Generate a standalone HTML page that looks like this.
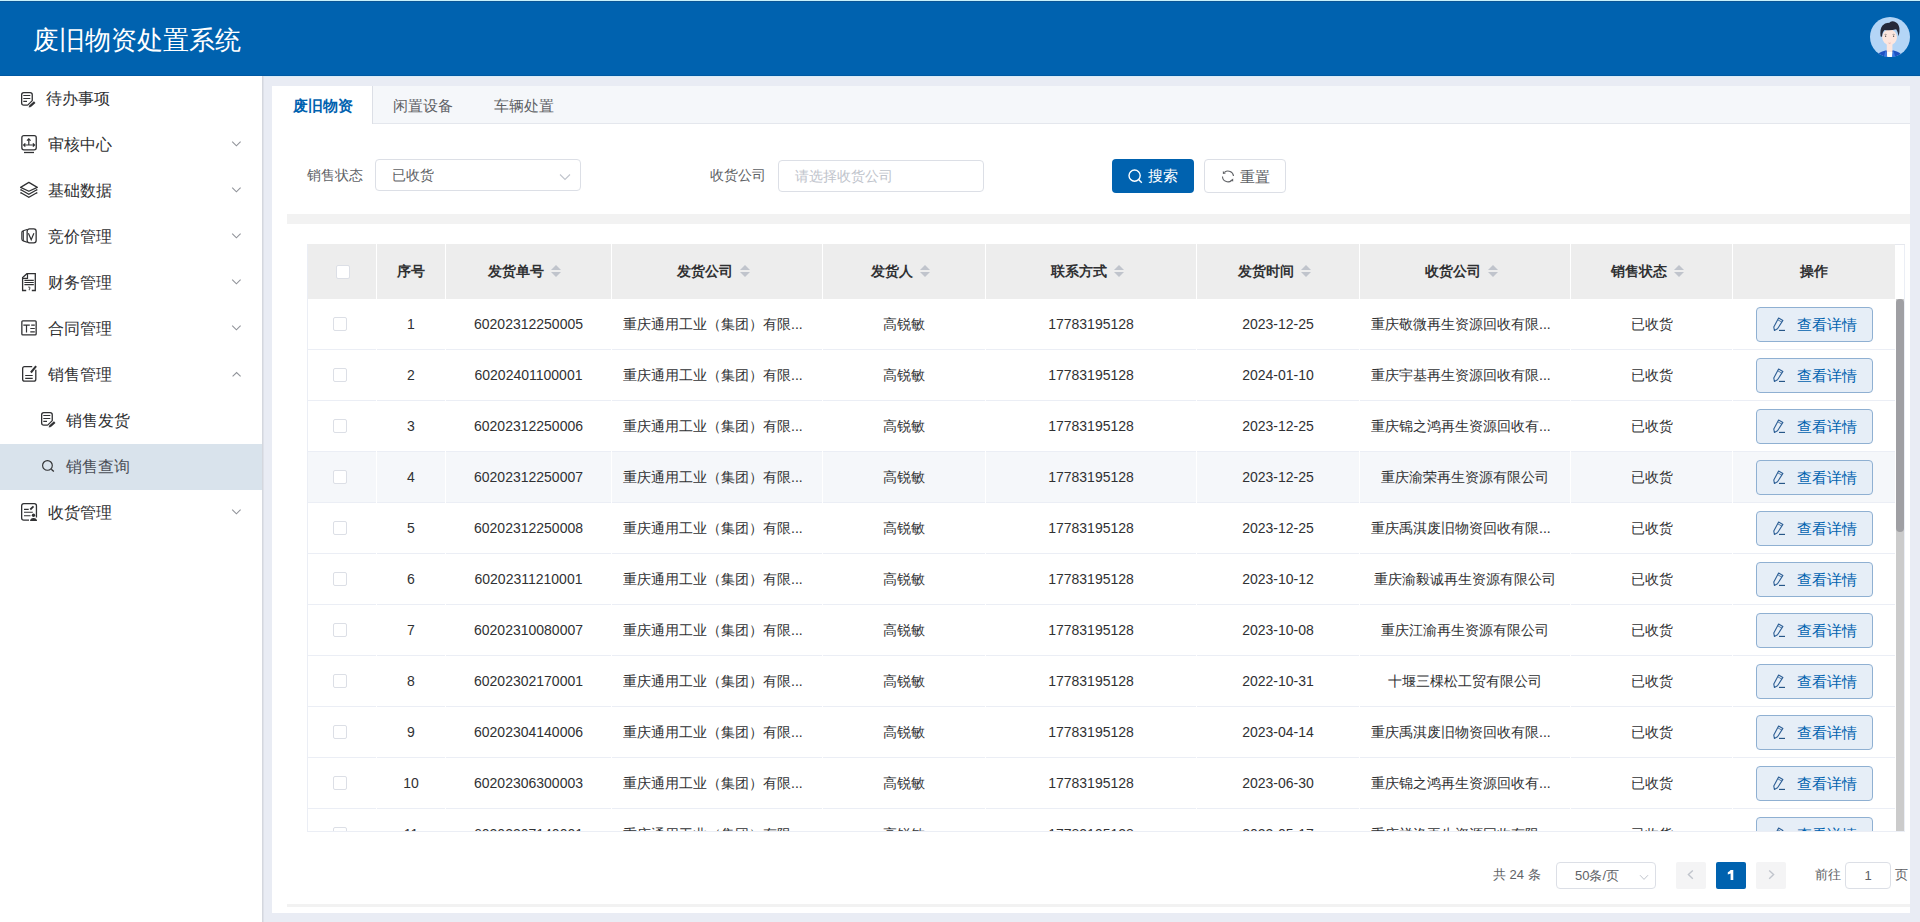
<!DOCTYPE html><html><head><meta charset="utf-8"><title>废旧物资处置系统</title><style>
*{box-sizing:border-box;margin:0;padding:0}
html,body{width:1920px;height:922px;overflow:hidden;background:#e9ecf4;font-family:"Liberation Sans",sans-serif;color:#303133}
.abs{position:absolute}
#hdr{left:0;top:0;width:1920px;height:76px;background:#0062af}
#hdr .l0{position:absolute;left:0;top:0;width:1920px;height:1px;background:#c6f1fc}
#hdr .l1{position:absolute;left:0;top:1px;width:1920px;height:1px;background:#0c5594}
#hdr .l2{position:absolute;left:0;top:75px;width:1920px;height:1px;background:#0059a3}
#hdr .l3{position:absolute;left:0;top:76px;width:1920px;height:1px;background:#d8ecf8}
#title{left:33px;top:22px;font-size:26px;line-height:36px;color:#fff;white-space:nowrap;letter-spacing:0}
#avatar{left:1870px;top:17px;width:40px;height:40px}
#side{left:0;top:76px;width:262px;height:846px;background:#fff}
#sideb{left:262px;top:76px;width:2px;height:846px;background:linear-gradient(90deg,#cfd2d9,#e3e6ee)}
.mi{position:absolute;left:0;width:262px;height:46px}
.mi .t{position:absolute;left:48px;top:13px;font-size:16px;line-height:20px;color:#303133;white-space:nowrap}
.mi svg.ic{position:absolute;left:17px;top:11px;width:24px;height:24px;overflow:visible}
.mi svg.ar{position:absolute;left:230px;top:18px;width:12px;height:10px}
.mi.sub .t{left:66px;color:#303133}
.mi.first .t{left:46px}
.mi.sub svg.ic{left:37px;top:9px}
.mi.sel{background:#d9e3ec}
.mi.sel .t{color:#4a4e56}
#card{left:272px;top:86px;width:1638px;height:827px;background:#fff}
#tabs{left:272px;top:86px;width:1638px;height:38px;background:#f5f7fa;border-bottom:1px solid #e4e7ed}
#tab1{left:272px;top:86px;width:101px;height:38px;background:#fff;border-right:1px solid #dcdfe6}
.tab{position:absolute;top:96px;font-size:15px;line-height:20px;white-space:nowrap;color:#606266}
.lbl{position:absolute;font-size:14px;line-height:20px;color:#606266;white-space:nowrap}
.inp{position:absolute;border:1px solid #dcdfe6;border-radius:4px;background:#fff}
.inp .v{position:absolute;left:16px;top:5px;font-size:14px;line-height:20px;color:#606266;white-space:nowrap}
.inp .ph{color:#c0c4cc}
.btn{position:absolute;border-radius:4px;font-size:15px;line-height:20px;white-space:nowrap}
#sep{left:287px;top:214px;width:1623px;height:10px;background:#f2f2f2}
#tbl{left:307px;top:244px;width:1598px;height:588px;border:1px solid #ebeef5;border-top:none;border-right:1px solid #ebeef5;overflow:hidden;background:#fff}
#thead{position:absolute;left:0;top:0;width:1588px;height:55px;background:#ededed}
.th{position:absolute;top:0;height:55px;border-right:1px solid #fff}
.th span{position:absolute;left:0;right:1px;top:17px;text-align:center;font-size:14px;line-height:20px;font-weight:bold;color:#303133;white-space:nowrap}
.sort{display:inline-block;position:relative;width:24px;height:14px;vertical-align:-3px;margin-left:0}
.sort b{position:absolute;left:7px;width:0;height:0;border-left:5px solid transparent;border-right:5px solid transparent}
.sort .up{top:0;border-bottom:5px solid #c0c4cc}
.sort .dn{top:7px;border-top:5px solid #c0c4cc}
.tr{position:absolute;left:0;width:1588px;height:51px;background:#fff}
.tr .c{position:absolute;top:0;height:51px;border-bottom:1px solid #ebeef5}
.tr.hov .c{background:#f5f7fa}
.td{position:absolute;top:15px;text-align:center;font-size:14px;line-height:20px;color:#303133;white-space:nowrap}
.cb{position:absolute;width:14px;height:14px;border:1px solid #dcdfe6;border-radius:2px;background:#fff}
.vbtn{position:absolute;left:1448px;top:8px;width:117px;height:35px;border:1px solid #8fb0d2;border-radius:4px;background:#e6eef7}
.vbtn span{position:absolute;left:40px;top:7px;font-size:15px;line-height:20px;color:#0062af;white-space:nowrap}
.vbtn svg{position:absolute;left:14px;top:8px;width:14px;height:15px;overflow:visible}
#sbtrack{left:1896px;top:299px;width:8px;height:532px;background:#cbcbcb}
#sbthumb{left:1896px;top:299px;width:8px;height:233px;background:#9f9fa3;border-radius:4px}
.pg{position:absolute;font-size:13px;line-height:20px;color:#606266;white-space:nowrap}
#bline{left:287px;top:904px;width:1623px;height:3px;background:#f2f2f2}
</style></head><body>
<div id="hdr" class="abs"><div class="l0"></div><div class="l1"></div><div class="l2"></div><div class="l3"></div></div>
<div id="title" class="abs">废旧物资处置系统</div>
<svg id="avatar" class="abs" viewBox="0 0 40 40">
<defs><clipPath id="avc"><circle cx="20" cy="20" r="20"/></clipPath></defs>
<circle cx="20" cy="20" r="20" fill="#b4d5f6"/>
<g clip-path="url(#avc)">
<path d="M6 41 Q7.5 35.2 15.5 33.6 L23.5 33.6 Q31.5 35.2 33 41 Z" fill="#1f52c2"/>
<path d="M16.8 27 H22.4 V41 H16.8 Z" fill="#fde6de"/>
<path d="M17.2 35 H22.2 V41 H17.2 Z" fill="#ffffff"/>
<path d="M15.6 33.6 L17.6 41 L13.5 41 Z M23.4 33.6 L21.6 41 L25.6 41 Z" fill="#3a7be6"/>
</g>
<ellipse cx="19.6" cy="20.2" rx="7.4" ry="7.8" fill="#fde6de"/>
<path d="M10.6 19.5 Q9.6 12 12.5 8.6 Q15 5.6 19 5.9 Q21.2 3.4 24.2 4.6 Q28.6 6 29.4 11 Q29.9 15 28.6 19.2 Q27.9 14.5 26.2 12.2 Q21 13.6 14.6 12.9 Q12.2 15 12 19.8 Z" fill="#262939"/>
<path d="M14.6 17.6 Q15.6 17.1 16.6 17.5 M22.6 17.5 Q23.6 17.1 24.6 17.6" fill="none" stroke="#444" stroke-width="0.5"/>
<circle cx="15.6" cy="19.2" r="0.65" fill="#333"/><circle cx="23.6" cy="19.2" r="0.65" fill="#333"/>
<path d="M18.6 26 Q19.6 26.7 20.6 26" fill="none" stroke="#e39a90" stroke-width="0.7"/>
</svg>
<div id="side" class="abs"></div><div id="sideb" class="abs"></div>
<div class="mi first" style="top:76px"><svg class="ic" viewBox="0 0 24 24"><path d="M10.7 18.15 H6.8 Q4.65 18.15 4.65 16 V7.8 Q4.65 5.65 6.8 5.65 H13.1 Q15.25 5.65 15.25 7.8 V13.6 L10.7 18.15" fill="none" stroke="#303133" stroke-width="1.3" stroke-linejoin="round"/><path d="M6.3 8.5 H13.3 M6.3 11.5 H13.3 M6.3 14.4 H10" fill="none" stroke="#303133" stroke-width="1.2"/><path d="M12.9 19.4 L17.7 15.1" stroke="#303133" stroke-width="2.2"/><path d="M11.7 20.6 L12.1 18.5 L13.7 20.1 Z" fill="#303133"/></svg><span class="t">待办事项</span></div>
<div class="mi " style="top:122px"><svg class="ic" viewBox="0 0 24 24"><rect x="4.85" y="2.65" width="14.4" height="14.2" rx="2" fill="none" stroke="#303133" stroke-width="1.3"/><path d="M7 19.5 H17" stroke="#303133" stroke-width="1.3"/><path d="M11.8 5.8 V12 M6.6 12 H17.6 M10 7.6 L11.8 5.8 L13.6 7.6 M8.3 10.3 L6.6 12 L8.3 13.7 M15.9 10.3 L17.6 12 L15.9 13.7" fill="none" stroke="#303133" stroke-width="1.2"/></svg><span class="t">审核中心</span><svg class="ar" viewBox="0 0 12 10"><path d="M2.2 1.6 L6.4 5.8 L10.6 1.6" fill="none" stroke="#909399" stroke-width="1.1"/></svg></div>
<div class="mi " style="top:168px"><svg class="ic" viewBox="0 0 24 24"><path d="M11.85 3.4 L20.3 8.4 L11.85 12.3 L3.6 8.4 Z" fill="none" stroke="#303133" stroke-width="1.25" stroke-linejoin="round"/><path d="M3.9 10.8 L11.85 15.3 L19.8 10.8 M3.9 13.8 L11.85 18.4 L19.8 13.8" fill="none" stroke="#303133" stroke-width="1.25"/><path d="M3.9 10.2 V11.4 M19.8 10.2 V11.4 M3.9 13.2 V14.4 M19.8 13.2 V14.4" stroke="#303133" stroke-width="1.2"/></svg><span class="t">基础数据</span><svg class="ar" viewBox="0 0 12 10"><path d="M2.2 1.6 L6.4 5.8 L10.6 1.6" fill="none" stroke="#909399" stroke-width="1.1"/></svg></div>
<div class="mi " style="top:214px"><svg class="ic" viewBox="0 0 24 24"><rect x="10.15" y="3.85" width="9" height="14" rx="2.4" fill="none" stroke="#303133" stroke-width="1.3"/><path d="M10.1 4.5 L6.2 5.8 Q4.85 6.2 4.85 7.6 V14.1 Q4.85 15.5 6.2 15.9 L10.1 17.2" fill="none" stroke="#303133" stroke-width="1.2"/><path d="M6.3 6 V15.7" stroke="#303133" stroke-width="1.1"/><path d="M11.4 8.2 L14.2 14.7 L16.9 8.2" fill="none" stroke="#303133" stroke-width="1.2"/></svg><span class="t">竞价管理</span><svg class="ar" viewBox="0 0 12 10"><path d="M2.2 1.6 L6.4 5.8 L10.6 1.6" fill="none" stroke="#909399" stroke-width="1.1"/></svg></div>
<div class="mi " style="top:260px"><svg class="ic" viewBox="0 0 24 24"><path d="M9.2 19.5 H5.6 V6.6 L9.9 2.7 H18.3 V19.5 H14.8" fill="none" stroke="#303133" stroke-width="1.3"/><path d="M5.6 7.4 H10.5 V2.7" fill="none" stroke="#303133" stroke-width="1.2"/><path d="M7.4 9.4 H16.8 M7.4 11.5 H16.8 M7.4 13.6 H16.8" stroke="#303133" stroke-width="1.1"/><path d="M11.2 16.3 Q12.2 15.6 12.8 16.4 Q13.1 17.6 12 19.2" fill="none" stroke="#555" stroke-width="1.1"/></svg><span class="t">财务管理</span><svg class="ar" viewBox="0 0 12 10"><path d="M2.2 1.6 L6.4 5.8 L10.6 1.6" fill="none" stroke="#909399" stroke-width="1.1"/></svg></div>
<div class="mi " style="top:306px"><svg class="ic" viewBox="0 0 24 24"><rect x="4.85" y="3.85" width="14.3" height="14.1" rx="1" fill="none" stroke="#303133" stroke-width="1.3"/><path d="M6.3 8.2 H12.8 M9.5 8.2 V15.5 M14.2 8.2 H17.8 M13.3 11.5 H17.8 M13.3 14.9 H17.8" fill="none" stroke="#303133" stroke-width="1.2"/></svg><span class="t">合同管理</span><svg class="ar" viewBox="0 0 12 10"><path d="M2.2 1.6 L6.4 5.8 L10.6 1.6" fill="none" stroke="#909399" stroke-width="1.1"/></svg></div>
<div class="mi " style="top:352px"><svg class="ic" viewBox="0 0 24 24"><path d="M15.2 3.55 H7.6 Q5.65 3.55 5.65 5.5 V16.2 Q5.65 18.15 7.6 18.15 H16.85 Q18.8 18.15 18.8 16.2 V6.8" fill="none" stroke="#303133" stroke-width="1.3"/><path d="M13.9 9.5 L19.1 3.2" stroke="#303133" stroke-width="2"/><path d="M8.2 12.5 H15.7 M8.2 15.4 H15.7" stroke="#303133" stroke-width="1.2"/></svg><span class="t">销售管理</span><svg class="ar" viewBox="0 0 12 10"><path d="M2.6 6.4 L6.6 2.6 L10.6 6.4" fill="none" stroke="#909399" stroke-width="1.1"/></svg></div>
<div class="mi sub" style="top:398px"><svg class="ic" viewBox="0 0 24 24"><path d="M10.7 18.15 H6.8 Q4.65 18.15 4.65 16 V7.8 Q4.65 5.65 6.8 5.65 H13.1 Q15.25 5.65 15.25 7.8 V13.6 L10.7 18.15" fill="none" stroke="#303133" stroke-width="1.3" stroke-linejoin="round"/><path d="M6.3 8.5 H13.3 M6.3 11.5 H13.3 M6.3 14.4 H10" fill="none" stroke="#303133" stroke-width="1.2"/><path d="M12.9 19.4 L17.7 15.1" stroke="#303133" stroke-width="2.2"/><path d="M11.7 20.6 L12.1 18.5 L13.7 20.1 Z" fill="#303133"/></svg><span class="t">销售发货</span></div>
<div class="mi sub sel" style="top:444px"><svg class="ic" viewBox="0 0 24 24"><circle cx="10.45" cy="12.4" r="4.85" fill="none" stroke="#303133" stroke-width="1.15"/><path d="M14.3 16.3 L16.8 18.6" stroke="#303133" stroke-width="1.3"/></svg><span class="t">销售查询</span></div>
<div class="mi " style="top:490px"><svg class="ic" viewBox="0 0 24 24"><path d="M12 19.15 H6.8 Q4.65 19.15 4.65 17 V4.8 Q4.65 2.65 6.8 2.65 H17.3 Q19.45 2.65 19.45 4.8 V16.5" fill="none" stroke="#303133" stroke-width="1.3"/><path d="M7 8.4 H11.7 M7 11.3 H15.8 M7 14.7 H13.5" stroke="#303133" stroke-width="1.1"/><path d="M13.3 8.5 L16.5 5.3" stroke="#303133" stroke-width="1.8"/><circle cx="16.5" cy="14.3" r="1.7" fill="#303133"/><path d="M13 19.9 Q13.3 16.9 16.5 16.9 Q19.7 16.9 20.1 19.9 Z" fill="#303133"/></svg><span class="t">收货管理</span><svg class="ar" viewBox="0 0 12 10"><path d="M2.2 1.6 L6.4 5.8 L10.6 1.6" fill="none" stroke="#909399" stroke-width="1.1"/></svg></div>
<div id="card" class="abs"></div>
<div id="tabs" class="abs"></div><div id="tab1" class="abs"></div>
<span class="tab" style="left:293px;color:#0062af;font-weight:bold">废旧物资</span>
<span class="tab" style="left:393px">闲置设备</span>
<span class="tab" style="left:494px">车辆处置</span>
<span class="lbl" style="left:307px;top:165px">销售状态</span>
<div class="inp" style="left:375px;top:159px;width:206px;height:32px"><span class="v">已收货</span><svg style="position:absolute;left:183px;top:13px;width:12px;height:8px" viewBox="0 0 12 8"><path d="M1 1.5 L6 6.5 L11 1.5" fill="none" stroke="#c0c4cc" stroke-width="1.1"/></svg></div>
<span class="lbl" style="left:710px;top:165px">收货公司</span>
<div class="inp" style="left:778px;top:160px;width:206px;height:32px"><span class="v ph">请选择收货公司</span></div>
<div class="btn" style="left:1112px;top:159px;width:82px;height:34px;background:#0062af"><svg style="position:absolute;left:16px;top:10px;width:15px;height:15px" viewBox="0 0 15 15"><circle cx="6.6" cy="6.6" r="5.6" fill="none" stroke="#fff" stroke-width="1.4"/><path d="M10.6 10.6 L13.8 13.8" stroke="#fff" stroke-width="1.4"/></svg><span style="position:absolute;left:36px;top:7px;color:#fff">搜索</span></div>
<div class="btn" style="left:1204px;top:159px;width:82px;height:34px;background:#fff;border:1px solid #dcdfe6"><svg style="position:absolute;left:15px;top:8px;width:16px;height:16px" viewBox="0 0 16 16"><path d="M4.6 4.3 A5.5 5.5 0 0 1 13.49 8.02" fill="none" stroke="#606266" stroke-width="1.1"/><path d="M2.5 8.4 A5.5 5.5 0 0 0 11.6 12.5" fill="none" stroke="#606266" stroke-width="1.1"/><path d="M2.9 3.1 L2.9 6 L5.8 5.6 Z" fill="#606266"/><path d="M13.2 10.6 L13.2 13.5 L10.2 12.6 Z" fill="#606266"/></svg><span style="position:absolute;left:35px;top:7px;color:#606266">重置</span></div>
<div id="sep" class="abs"></div>
<div id="tbl" class="abs">
<div id="thead">
<div class="th" style="left:0px;width:69px"><div class="cb" style="left:28px;top:21px"></div></div>
<div class="th" style="left:69px;width:69px"><span>序号</span></div>
<div class="th" style="left:138px;width:166px"><span>发货单号<i class="sort"><b class="up"></b><b class="dn"></b></i></span></div>
<div class="th" style="left:304px;width:211px"><span>发货公司<i class="sort"><b class="up"></b><b class="dn"></b></i></span></div>
<div class="th" style="left:515px;width:163px"><span>发货人<i class="sort"><b class="up"></b><b class="dn"></b></i></span></div>
<div class="th" style="left:678px;width:211px"><span>联系方式<i class="sort"><b class="up"></b><b class="dn"></b></i></span></div>
<div class="th" style="left:889px;width:163px"><span>发货时间<i class="sort"><b class="up"></b><b class="dn"></b></i></span></div>
<div class="th" style="left:1052px;width:211px"><span>收货公司<i class="sort"><b class="up"></b><b class="dn"></b></i></span></div>
<div class="th" style="left:1263px;width:162px"><span>销售状态<i class="sort"><b class="up"></b><b class="dn"></b></i></span></div>
<div class="th" style="left:1425px;width:163px"><span>操作</span></div>
</div>
<div class="tr" style="top:55px"><div class="c" style="left:0px;width:68px"></div><div class="c" style="left:69px;width:68px"></div><div class="c" style="left:138px;width:165px"></div><div class="c" style="left:304px;width:210px"></div><div class="c" style="left:515px;width:162px"></div><div class="c" style="left:678px;width:210px"></div><div class="c" style="left:889px;width:162px"></div><div class="c" style="left:1052px;width:210px"></div><div class="c" style="left:1263px;width:161px"></div><div class="c" style="left:1425px;width:162px"></div><div class="cb" style="left:25px;top:18px"></div><span class="td" style="left:69px;width:68px">1</span><span class="td" style="left:138px;width:165px">60202312250005</span><span class="td" style="left:315px;text-align:left">重庆通用工业（集团）有限...</span><span class="td" style="left:515px;width:162px">高锐敏</span><span class="td" style="left:678px;width:210px">17783195128</span><span class="td" style="left:889px;width:162px">2023-12-25</span><span class="td" style="left:1063px;text-align:left">重庆敬微再生资源回收有限...</span><span class="td" style="left:1263px;width:161px">已收货</span><div class="vbtn"><svg viewBox="0 0 14 15"><path d="M7.6 2.1 L11.9 4.4 L6.5 12.8 L3.4 14.4 L2.8 11.1 Z" fill="none" stroke="#2d5f96" stroke-width="1.1" stroke-linejoin="round"/><path d="M6.9 3.9 L10.9 6.1" stroke="#2d5f96" stroke-width="0.8"/><path d="M8 14.4 H14" stroke="#1d4e82" stroke-width="1.1"/></svg><span>查看详情</span></div></div>
<div class="tr" style="top:106px"><div class="c" style="left:0px;width:68px"></div><div class="c" style="left:69px;width:68px"></div><div class="c" style="left:138px;width:165px"></div><div class="c" style="left:304px;width:210px"></div><div class="c" style="left:515px;width:162px"></div><div class="c" style="left:678px;width:210px"></div><div class="c" style="left:889px;width:162px"></div><div class="c" style="left:1052px;width:210px"></div><div class="c" style="left:1263px;width:161px"></div><div class="c" style="left:1425px;width:162px"></div><div class="cb" style="left:25px;top:18px"></div><span class="td" style="left:69px;width:68px">2</span><span class="td" style="left:138px;width:165px">60202401100001</span><span class="td" style="left:315px;text-align:left">重庆通用工业（集团）有限...</span><span class="td" style="left:515px;width:162px">高锐敏</span><span class="td" style="left:678px;width:210px">17783195128</span><span class="td" style="left:889px;width:162px">2024-01-10</span><span class="td" style="left:1063px;text-align:left">重庆宇基再生资源回收有限...</span><span class="td" style="left:1263px;width:161px">已收货</span><div class="vbtn"><svg viewBox="0 0 14 15"><path d="M7.6 2.1 L11.9 4.4 L6.5 12.8 L3.4 14.4 L2.8 11.1 Z" fill="none" stroke="#2d5f96" stroke-width="1.1" stroke-linejoin="round"/><path d="M6.9 3.9 L10.9 6.1" stroke="#2d5f96" stroke-width="0.8"/><path d="M8 14.4 H14" stroke="#1d4e82" stroke-width="1.1"/></svg><span>查看详情</span></div></div>
<div class="tr" style="top:157px"><div class="c" style="left:0px;width:68px"></div><div class="c" style="left:69px;width:68px"></div><div class="c" style="left:138px;width:165px"></div><div class="c" style="left:304px;width:210px"></div><div class="c" style="left:515px;width:162px"></div><div class="c" style="left:678px;width:210px"></div><div class="c" style="left:889px;width:162px"></div><div class="c" style="left:1052px;width:210px"></div><div class="c" style="left:1263px;width:161px"></div><div class="c" style="left:1425px;width:162px"></div><div class="cb" style="left:25px;top:18px"></div><span class="td" style="left:69px;width:68px">3</span><span class="td" style="left:138px;width:165px">60202312250006</span><span class="td" style="left:315px;text-align:left">重庆通用工业（集团）有限...</span><span class="td" style="left:515px;width:162px">高锐敏</span><span class="td" style="left:678px;width:210px">17783195128</span><span class="td" style="left:889px;width:162px">2023-12-25</span><span class="td" style="left:1063px;text-align:left">重庆锦之鸿再生资源回收有...</span><span class="td" style="left:1263px;width:161px">已收货</span><div class="vbtn"><svg viewBox="0 0 14 15"><path d="M7.6 2.1 L11.9 4.4 L6.5 12.8 L3.4 14.4 L2.8 11.1 Z" fill="none" stroke="#2d5f96" stroke-width="1.1" stroke-linejoin="round"/><path d="M6.9 3.9 L10.9 6.1" stroke="#2d5f96" stroke-width="0.8"/><path d="M8 14.4 H14" stroke="#1d4e82" stroke-width="1.1"/></svg><span>查看详情</span></div></div>
<div class="tr hov" style="top:208px"><div class="c" style="left:0px;width:68px"></div><div class="c" style="left:69px;width:68px"></div><div class="c" style="left:138px;width:165px"></div><div class="c" style="left:304px;width:210px"></div><div class="c" style="left:515px;width:162px"></div><div class="c" style="left:678px;width:210px"></div><div class="c" style="left:889px;width:162px"></div><div class="c" style="left:1052px;width:210px"></div><div class="c" style="left:1263px;width:161px"></div><div class="c" style="left:1425px;width:162px"></div><div class="cb" style="left:25px;top:18px"></div><span class="td" style="left:69px;width:68px">4</span><span class="td" style="left:138px;width:165px">60202312250007</span><span class="td" style="left:315px;text-align:left">重庆通用工业（集团）有限...</span><span class="td" style="left:515px;width:162px">高锐敏</span><span class="td" style="left:678px;width:210px">17783195128</span><span class="td" style="left:889px;width:162px">2023-12-25</span><span class="td" style="left:1052px;width:210px">重庆渝荣再生资源有限公司</span><span class="td" style="left:1263px;width:161px">已收货</span><div class="vbtn"><svg viewBox="0 0 14 15"><path d="M7.6 2.1 L11.9 4.4 L6.5 12.8 L3.4 14.4 L2.8 11.1 Z" fill="none" stroke="#2d5f96" stroke-width="1.1" stroke-linejoin="round"/><path d="M6.9 3.9 L10.9 6.1" stroke="#2d5f96" stroke-width="0.8"/><path d="M8 14.4 H14" stroke="#1d4e82" stroke-width="1.1"/></svg><span>查看详情</span></div></div>
<div class="tr" style="top:259px"><div class="c" style="left:0px;width:68px"></div><div class="c" style="left:69px;width:68px"></div><div class="c" style="left:138px;width:165px"></div><div class="c" style="left:304px;width:210px"></div><div class="c" style="left:515px;width:162px"></div><div class="c" style="left:678px;width:210px"></div><div class="c" style="left:889px;width:162px"></div><div class="c" style="left:1052px;width:210px"></div><div class="c" style="left:1263px;width:161px"></div><div class="c" style="left:1425px;width:162px"></div><div class="cb" style="left:25px;top:18px"></div><span class="td" style="left:69px;width:68px">5</span><span class="td" style="left:138px;width:165px">60202312250008</span><span class="td" style="left:315px;text-align:left">重庆通用工业（集团）有限...</span><span class="td" style="left:515px;width:162px">高锐敏</span><span class="td" style="left:678px;width:210px">17783195128</span><span class="td" style="left:889px;width:162px">2023-12-25</span><span class="td" style="left:1063px;text-align:left">重庆禹淇废旧物资回收有限...</span><span class="td" style="left:1263px;width:161px">已收货</span><div class="vbtn"><svg viewBox="0 0 14 15"><path d="M7.6 2.1 L11.9 4.4 L6.5 12.8 L3.4 14.4 L2.8 11.1 Z" fill="none" stroke="#2d5f96" stroke-width="1.1" stroke-linejoin="round"/><path d="M6.9 3.9 L10.9 6.1" stroke="#2d5f96" stroke-width="0.8"/><path d="M8 14.4 H14" stroke="#1d4e82" stroke-width="1.1"/></svg><span>查看详情</span></div></div>
<div class="tr" style="top:310px"><div class="c" style="left:0px;width:68px"></div><div class="c" style="left:69px;width:68px"></div><div class="c" style="left:138px;width:165px"></div><div class="c" style="left:304px;width:210px"></div><div class="c" style="left:515px;width:162px"></div><div class="c" style="left:678px;width:210px"></div><div class="c" style="left:889px;width:162px"></div><div class="c" style="left:1052px;width:210px"></div><div class="c" style="left:1263px;width:161px"></div><div class="c" style="left:1425px;width:162px"></div><div class="cb" style="left:25px;top:18px"></div><span class="td" style="left:69px;width:68px">6</span><span class="td" style="left:138px;width:165px">60202311210001</span><span class="td" style="left:315px;text-align:left">重庆通用工业（集团）有限...</span><span class="td" style="left:515px;width:162px">高锐敏</span><span class="td" style="left:678px;width:210px">17783195128</span><span class="td" style="left:889px;width:162px">2023-10-12</span><span class="td" style="left:1052px;width:210px">重庆渝毅诚再生资源有限公司</span><span class="td" style="left:1263px;width:161px">已收货</span><div class="vbtn"><svg viewBox="0 0 14 15"><path d="M7.6 2.1 L11.9 4.4 L6.5 12.8 L3.4 14.4 L2.8 11.1 Z" fill="none" stroke="#2d5f96" stroke-width="1.1" stroke-linejoin="round"/><path d="M6.9 3.9 L10.9 6.1" stroke="#2d5f96" stroke-width="0.8"/><path d="M8 14.4 H14" stroke="#1d4e82" stroke-width="1.1"/></svg><span>查看详情</span></div></div>
<div class="tr" style="top:361px"><div class="c" style="left:0px;width:68px"></div><div class="c" style="left:69px;width:68px"></div><div class="c" style="left:138px;width:165px"></div><div class="c" style="left:304px;width:210px"></div><div class="c" style="left:515px;width:162px"></div><div class="c" style="left:678px;width:210px"></div><div class="c" style="left:889px;width:162px"></div><div class="c" style="left:1052px;width:210px"></div><div class="c" style="left:1263px;width:161px"></div><div class="c" style="left:1425px;width:162px"></div><div class="cb" style="left:25px;top:18px"></div><span class="td" style="left:69px;width:68px">7</span><span class="td" style="left:138px;width:165px">60202310080007</span><span class="td" style="left:315px;text-align:left">重庆通用工业（集团）有限...</span><span class="td" style="left:515px;width:162px">高锐敏</span><span class="td" style="left:678px;width:210px">17783195128</span><span class="td" style="left:889px;width:162px">2023-10-08</span><span class="td" style="left:1052px;width:210px">重庆江渝再生资源有限公司</span><span class="td" style="left:1263px;width:161px">已收货</span><div class="vbtn"><svg viewBox="0 0 14 15"><path d="M7.6 2.1 L11.9 4.4 L6.5 12.8 L3.4 14.4 L2.8 11.1 Z" fill="none" stroke="#2d5f96" stroke-width="1.1" stroke-linejoin="round"/><path d="M6.9 3.9 L10.9 6.1" stroke="#2d5f96" stroke-width="0.8"/><path d="M8 14.4 H14" stroke="#1d4e82" stroke-width="1.1"/></svg><span>查看详情</span></div></div>
<div class="tr" style="top:412px"><div class="c" style="left:0px;width:68px"></div><div class="c" style="left:69px;width:68px"></div><div class="c" style="left:138px;width:165px"></div><div class="c" style="left:304px;width:210px"></div><div class="c" style="left:515px;width:162px"></div><div class="c" style="left:678px;width:210px"></div><div class="c" style="left:889px;width:162px"></div><div class="c" style="left:1052px;width:210px"></div><div class="c" style="left:1263px;width:161px"></div><div class="c" style="left:1425px;width:162px"></div><div class="cb" style="left:25px;top:18px"></div><span class="td" style="left:69px;width:68px">8</span><span class="td" style="left:138px;width:165px">60202302170001</span><span class="td" style="left:315px;text-align:left">重庆通用工业（集团）有限...</span><span class="td" style="left:515px;width:162px">高锐敏</span><span class="td" style="left:678px;width:210px">17783195128</span><span class="td" style="left:889px;width:162px">2022-10-31</span><span class="td" style="left:1052px;width:210px">十堰三棵松工贸有限公司</span><span class="td" style="left:1263px;width:161px">已收货</span><div class="vbtn"><svg viewBox="0 0 14 15"><path d="M7.6 2.1 L11.9 4.4 L6.5 12.8 L3.4 14.4 L2.8 11.1 Z" fill="none" stroke="#2d5f96" stroke-width="1.1" stroke-linejoin="round"/><path d="M6.9 3.9 L10.9 6.1" stroke="#2d5f96" stroke-width="0.8"/><path d="M8 14.4 H14" stroke="#1d4e82" stroke-width="1.1"/></svg><span>查看详情</span></div></div>
<div class="tr" style="top:463px"><div class="c" style="left:0px;width:68px"></div><div class="c" style="left:69px;width:68px"></div><div class="c" style="left:138px;width:165px"></div><div class="c" style="left:304px;width:210px"></div><div class="c" style="left:515px;width:162px"></div><div class="c" style="left:678px;width:210px"></div><div class="c" style="left:889px;width:162px"></div><div class="c" style="left:1052px;width:210px"></div><div class="c" style="left:1263px;width:161px"></div><div class="c" style="left:1425px;width:162px"></div><div class="cb" style="left:25px;top:18px"></div><span class="td" style="left:69px;width:68px">9</span><span class="td" style="left:138px;width:165px">60202304140006</span><span class="td" style="left:315px;text-align:left">重庆通用工业（集团）有限...</span><span class="td" style="left:515px;width:162px">高锐敏</span><span class="td" style="left:678px;width:210px">17783195128</span><span class="td" style="left:889px;width:162px">2023-04-14</span><span class="td" style="left:1063px;text-align:left">重庆禹淇废旧物资回收有限...</span><span class="td" style="left:1263px;width:161px">已收货</span><div class="vbtn"><svg viewBox="0 0 14 15"><path d="M7.6 2.1 L11.9 4.4 L6.5 12.8 L3.4 14.4 L2.8 11.1 Z" fill="none" stroke="#2d5f96" stroke-width="1.1" stroke-linejoin="round"/><path d="M6.9 3.9 L10.9 6.1" stroke="#2d5f96" stroke-width="0.8"/><path d="M8 14.4 H14" stroke="#1d4e82" stroke-width="1.1"/></svg><span>查看详情</span></div></div>
<div class="tr" style="top:514px"><div class="c" style="left:0px;width:68px"></div><div class="c" style="left:69px;width:68px"></div><div class="c" style="left:138px;width:165px"></div><div class="c" style="left:304px;width:210px"></div><div class="c" style="left:515px;width:162px"></div><div class="c" style="left:678px;width:210px"></div><div class="c" style="left:889px;width:162px"></div><div class="c" style="left:1052px;width:210px"></div><div class="c" style="left:1263px;width:161px"></div><div class="c" style="left:1425px;width:162px"></div><div class="cb" style="left:25px;top:18px"></div><span class="td" style="left:69px;width:68px">10</span><span class="td" style="left:138px;width:165px">60202306300003</span><span class="td" style="left:315px;text-align:left">重庆通用工业（集团）有限...</span><span class="td" style="left:515px;width:162px">高锐敏</span><span class="td" style="left:678px;width:210px">17783195128</span><span class="td" style="left:889px;width:162px">2023-06-30</span><span class="td" style="left:1063px;text-align:left">重庆锦之鸿再生资源回收有...</span><span class="td" style="left:1263px;width:161px">已收货</span><div class="vbtn"><svg viewBox="0 0 14 15"><path d="M7.6 2.1 L11.9 4.4 L6.5 12.8 L3.4 14.4 L2.8 11.1 Z" fill="none" stroke="#2d5f96" stroke-width="1.1" stroke-linejoin="round"/><path d="M6.9 3.9 L10.9 6.1" stroke="#2d5f96" stroke-width="0.8"/><path d="M8 14.4 H14" stroke="#1d4e82" stroke-width="1.1"/></svg><span>查看详情</span></div></div>
<div class="tr" style="top:565px"><div class="c" style="left:0px;width:68px"></div><div class="c" style="left:69px;width:68px"></div><div class="c" style="left:138px;width:165px"></div><div class="c" style="left:304px;width:210px"></div><div class="c" style="left:515px;width:162px"></div><div class="c" style="left:678px;width:210px"></div><div class="c" style="left:889px;width:162px"></div><div class="c" style="left:1052px;width:210px"></div><div class="c" style="left:1263px;width:161px"></div><div class="c" style="left:1425px;width:162px"></div><div class="cb" style="left:25px;top:18px"></div><span class="td" style="left:69px;width:68px">11</span><span class="td" style="left:138px;width:165px">60202307140001</span><span class="td" style="left:315px;text-align:left">重庆通用工业（集团）有限...</span><span class="td" style="left:515px;width:162px">高锐敏</span><span class="td" style="left:678px;width:210px">17783195128</span><span class="td" style="left:889px;width:162px">2023-05-17</span><span class="td" style="left:1063px;text-align:left">重庆祥洛再生资源回收有限...</span><span class="td" style="left:1263px;width:161px">已收货</span><div class="vbtn"><svg viewBox="0 0 14 15"><path d="M7.6 2.1 L11.9 4.4 L6.5 12.8 L3.4 14.4 L2.8 11.1 Z" fill="none" stroke="#2d5f96" stroke-width="1.1" stroke-linejoin="round"/><path d="M6.9 3.9 L10.9 6.1" stroke="#2d5f96" stroke-width="0.8"/><path d="M8 14.4 H14" stroke="#1d4e82" stroke-width="1.1"/></svg><span>查看详情</span></div></div>
</div>
<div class="abs" style="left:1895px;top:244px;width:10px;height:1px;background:#e6e8ee"></div>
<div id="sbtrack" class="abs"></div><div id="sbthumb" class="abs"></div>
<span class="pg" style="left:1493px;top:865px">共 24 条</span>
<div class="inp" style="left:1556px;top:862px;width:100px;height:27px"><span class="v" style="left:18px;top:3px;font-size:13px;color:#606266">50条/页</span><svg style="position:absolute;left:82px;top:11px;width:10px;height:7px" viewBox="0 0 10 7"><path d="M1 1.2 L5 5.4 L9 1.2" fill="none" stroke="#c0c4cc" stroke-width="1"/></svg></div>
<div class="abs" style="left:1676px;top:862px;width:30px;height:27px;background:#f4f4f5;border-radius:2px"><svg style="position:absolute;left:10px;top:7px;width:10px;height:11px" viewBox="0 0 10 11"><path d="M6.8 1.4 L2.4 5.6 L6.8 9.8" fill="none" stroke="#c0c4cc" stroke-width="1.4"/></svg></div>
<div class="abs" style="left:1716px;top:862px;width:30px;height:27px;background:#0062af;border-radius:2px"><svg style="position:absolute;left:0;top:0;width:30px;height:27px" viewBox="0 0 30 27"><path d="M14.6 8 H17.3 V18 H14.6 V11.6 Q13.3 12.3 11.8 12.5 V10.3 Q13.8 9.6 14.6 8 Z" fill="#fff"/></svg></div>
<div class="abs" style="left:1756px;top:862px;width:30px;height:27px;background:#f4f4f5;border-radius:2px"><svg style="position:absolute;left:10px;top:7px;width:10px;height:11px" viewBox="0 0 10 11"><path d="M3.2 1.4 L7.6 5.6 L3.2 9.8" fill="none" stroke="#c0c4cc" stroke-width="1.4"/></svg></div>
<span class="pg" style="left:1815px;top:865px">前往</span>
<div class="inp" style="left:1845px;top:862px;width:46px;height:27px"><span class="v" style="left:0;width:44px;text-align:center;top:3px;font-size:13px">1</span></div>
<span class="pg" style="left:1895px;top:865px">页</span>
<div id="bline" class="abs"></div>
</body></html>
